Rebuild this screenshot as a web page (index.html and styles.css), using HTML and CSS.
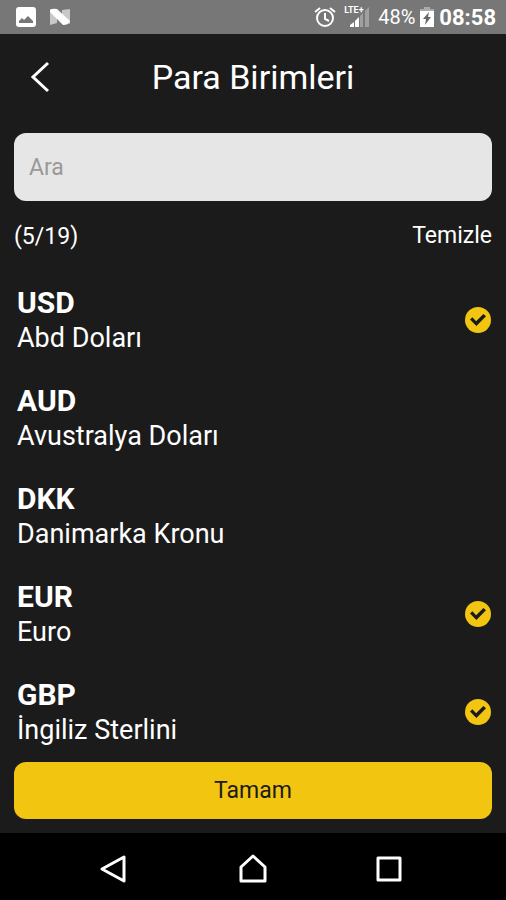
FILE: index.html
```html
<!DOCTYPE html>
<html lang="tr">
<head>
    <meta charset="UTF-8">
    <meta name="viewport" content="width=device-width, initial-scale=1.0">
    <title>Para Birimleri</title>
    <link rel="stylesheet" href="styles.css">
</head>
<body>
    <div class="status-bar">
        <div class="status-group notifications">
            <svg width="20" height="20" viewBox="0 0 20 20">
                <rect width="20" height="20" rx="3" fill="#fff"/>
                <path d="M3 16v-2l3-3 2 2 4-4 5 5v2z" fill="#777"/>
            </svg>
            <svg width="22" height="18" viewBox="0 0 22 18">
                <path d="M1 1l7 4v10l-7 2zM21 1v15l-8-4V2z" fill="#c8c8c8"/>
                <path d="M1 2Q3 0 8 1l13 12q-1 4-7 4L1 4z" fill="#fff"/>
            </svg>
        </div>
        <div class="status-group">
            <svg width="22" height="22" viewBox="0 0 22 22" fill="none" stroke="#fff" stroke-width="2">
                <circle cx="11" cy="12" r="8"/>
                <path d="M11 7v6l4 2M1 6l5-4M21 6l-5-4"/>
            </svg>
            <div class="signal">
                <span class="network">LTE+</span>
                <svg width="20" height="20" viewBox="0 0 20 20">
                    <path d="M10 9l3-3v14h-3zM15 4l4-4v20h-4z" fill="#a0a0a0"/>
                    <path d="M0 20v-2l4-3v5zM5 20v-6l4-4v10z" fill="#fff"/>
                </svg>
            </div>
            <span class="battery-level">48%</span>
            <svg width="14" height="20" viewBox="0 0 14 20">
                <path d="M4 0h6v2h4v3H0V2h4z" fill="#aaa"/>
                <path d="M0 4h14v16H0z" fill="#fff"/>
                <path d="M9 5l-6 7h3l-1 6 6-8H8z" fill="#666"/>
            </svg>
            <span class="clock">08:58</span>
        </div>
    </div>

    <header class="header">
        <button class="back" type="button" aria-label="Geri">
            <svg width="20" height="32" viewBox="0 0 20 32" fill="none" stroke="#fff" stroke-width="3">
                <path d="M18 2L3 16l15 14"/>
            </svg>
        </button>
        <h1 class="title">Para Birimleri</h1>
    </header>

    <main class="content">
        <input class="search" type="search" placeholder="Ara" aria-label="Ara">

        <div class="summary">
            <span>(5/19)</span>
            <button class="clear" type="button">Temizle</button>
        </div>

        <ul class="currency-list">
            <li>
                <label class="currency">
                    <span class="currency-text">
                        <strong class="code">USD</strong>
                        <span class="name">Abd Doları</span>
                    </span>
                    <input class="check" type="checkbox" checked>
                </label>
            </li>
            <li>
                <label class="currency">
                    <span class="currency-text">
                        <strong class="code">AUD</strong>
                        <span class="name">Avustralya Doları</span>
                    </span>
                    <input class="check" type="checkbox">
                </label>
            </li>
            <li>
                <label class="currency">
                    <span class="currency-text">
                        <strong class="code">DKK</strong>
                        <span class="name">Danimarka Kronu</span>
                    </span>
                    <input class="check" type="checkbox">
                </label>
            </li>
            <li>
                <label class="currency">
                    <span class="currency-text">
                        <strong class="code">EUR</strong>
                        <span class="name">Euro</span>
                    </span>
                    <input class="check" type="checkbox" checked>
                </label>
            </li>
            <li>
                <label class="currency">
                    <span class="currency-text">
                        <strong class="code">GBP</strong>
                        <span class="name">İngiliz Sterlini</span>
                    </span>
                    <input class="check" type="checkbox" checked>
                </label>
            </li>
        </ul>

        <button class="submit" type="button">Tamam</button>
    </main>

    <nav class="nav-bar">
        <button class="nav-button" type="button" aria-label="Geri">
            <svg width="28" height="30" viewBox="0 0 28 30" fill="none" stroke="#fff" stroke-width="3" stroke-linejoin="round">
                <path d="M25 3v24L3 15z"/>
            </svg>
        </button>
        <button class="nav-button" type="button" aria-label="Ana ekran">
            <svg width="30" height="30" viewBox="0 0 30 30" fill="none" stroke="#fff" stroke-width="3" stroke-linejoin="round">
                <path d="M4 13L16 2l12 11v14H4z"/>
            </svg>
        </button>
        <button class="nav-button" type="button" aria-label="Son uygulamalar">
            <svg width="26" height="26" viewBox="0 0 26 26" fill="none" stroke="#fff" stroke-width="3" stroke-linejoin="round">
                <path d="M2 2h22v22H2z"/>
            </svg>
        </button>
    </nav>
</body>
</html>
```
FILE: styles.css
```css
* {
    box-sizing: border-box;
    margin: 0;
    padding: 0;
}

body {
    display: flex;
    flex-direction: column;
    height: 100vh;
    background-color: #1b1b1b;
    color: #fff;
    font-family: Roboto, "Noto Sans", sans-serif;
}

button {
    background: none;
    border: none;
    color: inherit;
    font-family: inherit;
    cursor: pointer;
}

svg {
    display: block;
}

.status-bar {
    display: flex;
    justify-content: space-between;
    align-items: center;
    flex-shrink: 0;
    height: 34px;
    padding: 0 10px 0 16px;
    background-color: #777;
}

.status-group {
    display: flex;
    align-items: center;
    gap: 5px;
}

.notifications {
    gap: 13px;
}

.signal {
    display: flex;
    align-items: center;
    position: relative;
    padding-left: 6px;
    margin-left: 3px;
}

.network {
    position: absolute;
    top: -2px;
    left: 0;
    font-size: 9px;
    font-weight: 700;
    line-height: 10px;
}

.battery-level {
    margin-left: 3px;
    font-size: 20px;
}

.clock {
    font-size: 22px;
    font-weight: 700;
}

.header {
    display: grid;
    grid-template-columns: 50px 1fr 50px;
    align-items: center;
    flex-shrink: 0;
    height: 85px;
    padding: 0 15px;
}

.back {
    display: flex;
    justify-content: center;
    padding: 8px 0;
}

.title {
    font-size: 34px;
    font-weight: 400;
    line-height: 40px;
    text-align: center;
}

.content {
    display: flex;
    flex-direction: column;
    flex: 1;
    min-height: 0;
    padding: 14px;
}

.search {
    flex-shrink: 0;
    width: 100%;
    height: 68px;
    padding: 0 15px;
    background-color: #e6e6e6;
    border: none;
    border-radius: 12px;
    outline: none;
    color: #1b1b1b;
    font-family: inherit;
    font-size: 23px;
    appearance: none;
}

.search::placeholder {
    color: #999;
}

.summary {
    display: flex;
    justify-content: space-between;
    align-items: center;
    flex-shrink: 0;
    height: 70px;
    font-size: 23px;
}

.clear {
    font-size: 23px;
    line-height: 32px;
}

.currency-list {
    flex: 1;
    min-height: 0;
    overflow: hidden;
    list-style: none;
}

.currency {
    display: flex;
    justify-content: space-between;
    align-items: center;
    padding: 14px 1px 14px 3px;
    cursor: pointer;
}

.currency-text {
    display: flex;
    flex-direction: column;
}

.code {
    font-size: 30px;
    font-weight: 700;
    line-height: 36px;
}

.name {
    font-size: 27px;
    line-height: 34px;
}

.check {
    width: 26px;
    height: 26px;
    border-radius: 50%;
    appearance: none;
}

.check:checked {
    display: grid;
    place-items: center;
    background-color: #f2c511;
}

.check:checked::before {
    content: "";
    width: 16px;
    height: 12px;
    background-color: #1b1b1b;
    clip-path: polygon(0 45%, 15% 28%, 38% 60%, 84% 0, 100% 18%, 40% 100%);
}

.submit {
    flex-shrink: 0;
    height: 57px;
    background-color: #f2c511;
    border-radius: 12px;
    color: #1b1b1b;
    font-size: 23px;
}

.nav-bar {
    display: flex;
    justify-content: space-between;
    align-items: center;
    flex-shrink: 0;
    height: 67px;
    padding: 4px 94px 0 89px;
    background-color: #000;
}

.nav-button {
    padding: 4px 10px;
}
```
